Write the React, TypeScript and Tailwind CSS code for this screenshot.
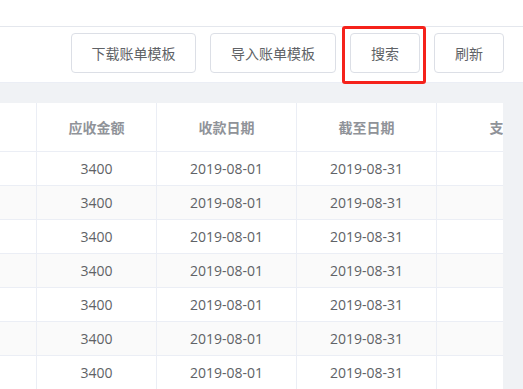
import React from "react";

const cols = ["w-[37px]", "w-[120px]", "w-[140px]", "w-[140px]", "w-[162px]"];

function Btn({ label, w }: { label: string; w: string }) {
  return (
    <div className={`relative ${w} h-[40px] shrink-0`}>
      <button className="w-full h-full border border-[#dcdfe6] rounded-[4px] bg-white text-[14px] text-[#606266] flex items-center justify-center">
        {label}
      </button>
    </div>
  );
}

export default function App() {
  const rows = Array.from({ length: 7 });
  return (
    <div
      className="w-[523px] h-[389px] overflow-hidden bg-[#f0f2f5]"
      style={{ fontFamily: '"Open Sans", "Noto Sans CJK SC", sans-serif' }}
    >
      <div className="h-[27px] bg-white border-b border-[#e4e7ed]" />
      <div className="h-[56px] bg-white border-b border-[#ebeef5] flex justify-end items-start pt-[6px] pr-[19px] gap-[14px]">
        <Btn label="下载账单模板" w="w-[125px]" />
        <Btn label="导入账单模板" w="w-[126px]" />
        <div className="w-[70px] h-[40px] shrink-0 relative">
          <button className="w-full h-full border border-[#dcdfe6] rounded-[4px] bg-white text-[14px] text-[#606266] flex items-center justify-center">
            搜索
          </button>
          <div className="absolute left-[-8px] right-[-6px] top-[-7px] bottom-[-11px] border-[3px] border-[#f5221b] rounded-[3px] pointer-events-none" />
        </div>
        <Btn label="刷新" w="w-[70px]" />
      </div>
      <div className="pt-[20px]">
        <div className="w-[503px] overflow-hidden bg-white">
          <div className="w-[599px]">
            <div className="flex h-[49px] border-b border-[#ebeef5]">
              {["", "应收金额", "收款日期", "截至日期", "支付方式"].map((t, i) => (
                <div
                  key={i}
                  className={`${cols[i]} shrink-0 h-full border-r border-[#ebeef5] flex items-center justify-center text-[14px] font-bold text-[#909399]`}
                >
                  {t}
                </div>
              ))}
            </div>
            {rows.map((_, r) => (
              <div
                key={r}
                className={`flex h-[34px] border-b border-[#ebeef5] ${r % 2 === 1 ? "bg-[#fafafa]" : "bg-white"}`}
              >
                {["", "3400", "2019-08-01", "2019-08-31", ""].map((t, i) => (
                  <div
                    key={i}
                    className={`${cols[i]} shrink-0 h-full border-r border-[#ebeef5] flex items-center justify-center text-[14px] text-[#606266]`}
                  >
                    {t}
                  </div>
                ))}
              </div>
            ))}
          </div>
        </div>
      </div>
    </div>
  );
}
